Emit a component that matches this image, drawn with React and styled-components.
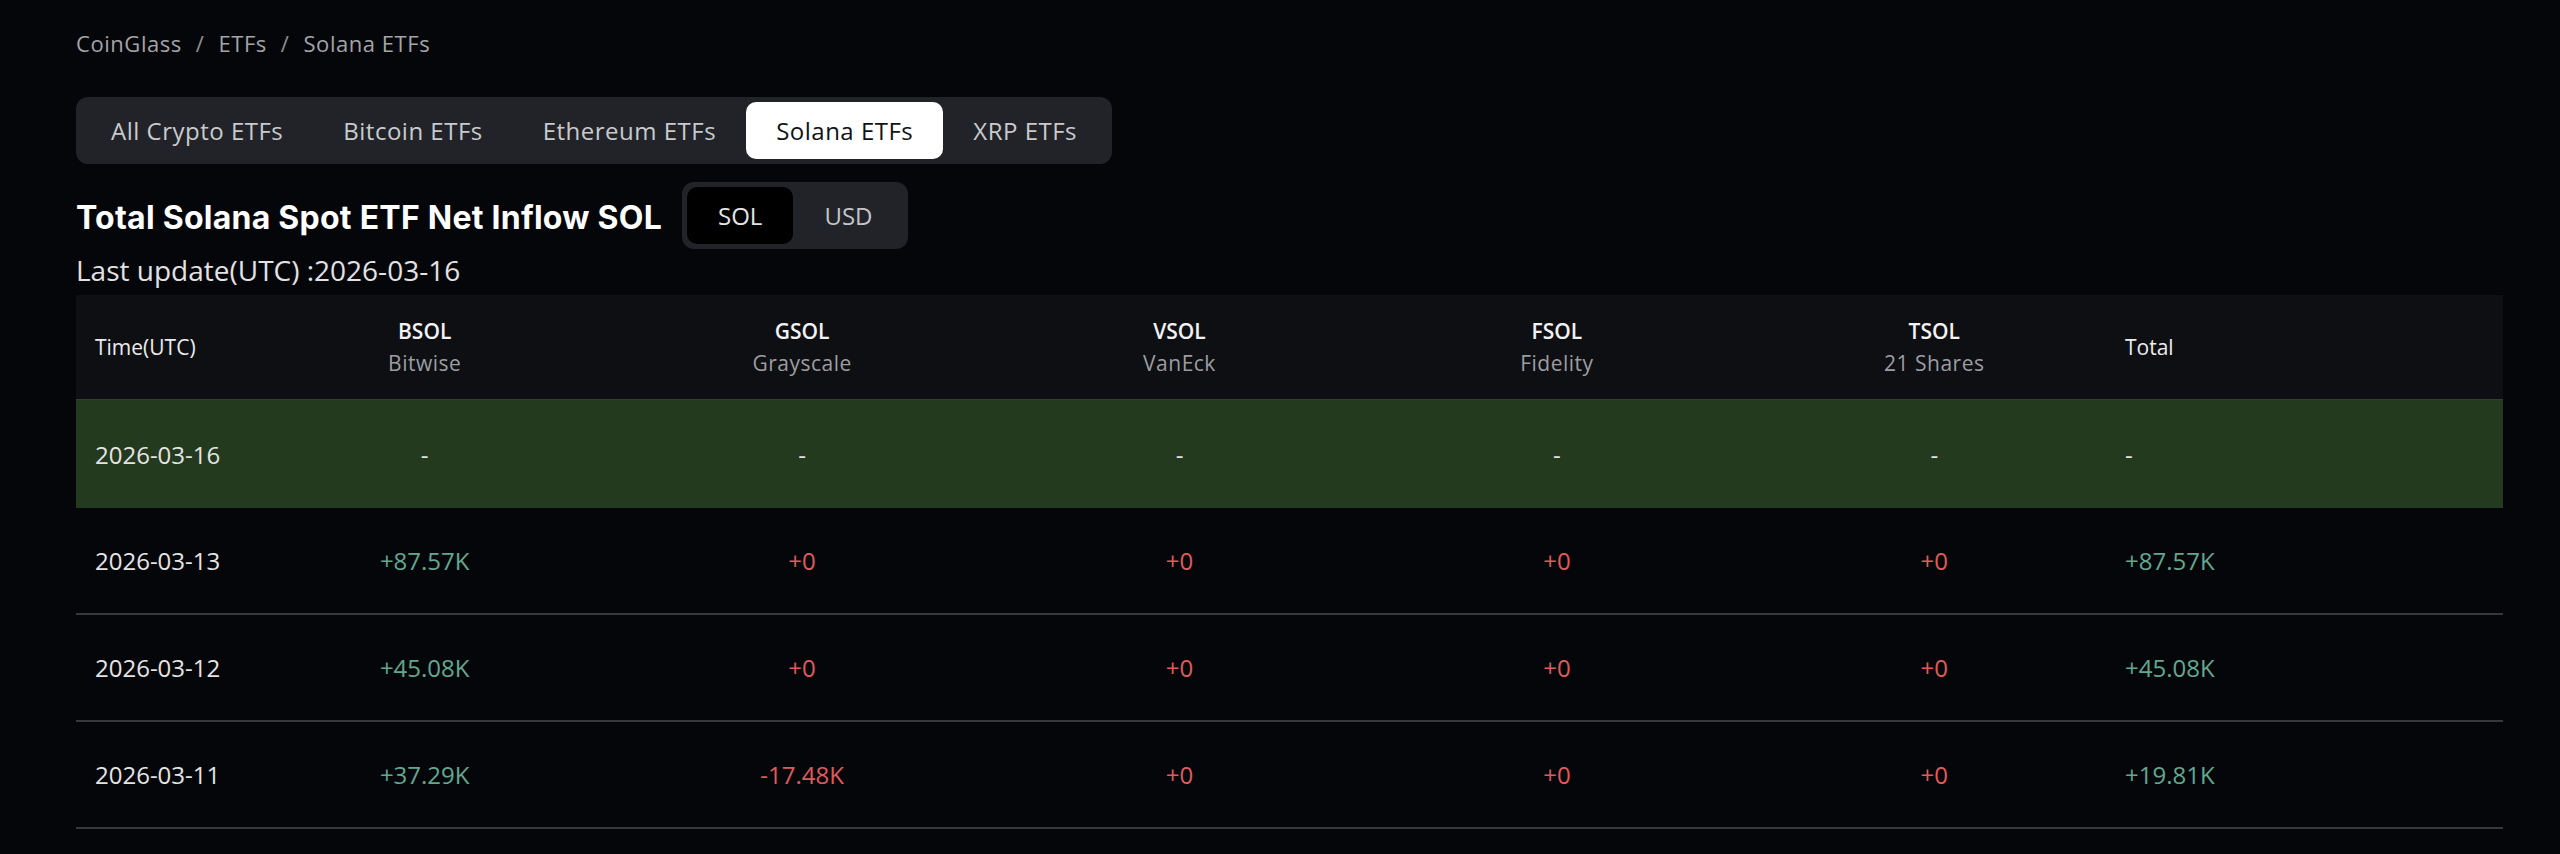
import React from 'react';
import styled, { createGlobalStyle } from 'styled-components';

const GlobalStyle = createGlobalStyle`
  html, body { margin: 0; padding: 0; background: #05060a; }
  body { font-family: "Open Sans", "Noto Sans", sans-serif; color: #e6e6e6; }
  * { box-sizing: border-box; }
`;

const Page = styled.div`
  width: 2503px;
  padding: 28px 0 0 76px;
`;

const Breadcrumb = styled.nav`
  display: flex;
  align-items: center;
  gap: 14px;
  font-size: 22px;
  line-height: 30px;
  letter-spacing: 0.55px;
  color: #a3a4a8;
`;

const Sep = styled.span`
  color: #8e8f93;
`;

const TabBar = styled.div`
  margin-top: 39px;
  display: inline-flex;
  padding: 5px;
  background: #212329;
  border-radius: 12px;
`;

const Tab = styled.div`
  height: 57px;
  padding: 0 30px;
  display: flex;
  align-items: center;
  font-size: 24px;
  letter-spacing: 0.5px;
  border-radius: 10px;
  color: ${p => (p.$active ? '#111214' : '#c9cacd')};
  background: ${p => (p.$active ? '#ffffff' : 'transparent')};
`;

const TitleRow = styled.div`
  margin-top: 18px;
  display: flex;
  align-items: center;
  gap: 20px;
`;

const Title = styled.h1`
  margin: 3px 0 0;
  font-family: Inter, "Open Sans", sans-serif;
  font-weight: 700;
  font-size: 32px;
  letter-spacing: 0.25px;
  color: #ffffff;
`;

const Toggle = styled.div`
  display: flex;
  padding: 5px;
  background: #212329;
  border-radius: 12px;
`;

const ToggleBtn = styled.div`
  height: 57px;
  padding: 0 31px;
  display: flex;
  align-items: center;
  font-size: 24px;
  border-radius: 10px;
  color: ${p => (p.$active ? '#e4e4e6' : '#c4c5c9')};
  background: ${p => (p.$active ? '#000000' : 'transparent')};
`;

const Updated = styled.div`
  margin-top: 5px;
  font-size: 28px;
  line-height: 33px;
  color: #e2e2e4;
`;

const Table = styled.div`
  margin-top: 8px;
  width: 2427px;
`;

const cols = '160px repeat(5, 1fr) 380px';

const HeadRow = styled.div`
  display: grid;
  grid-template-columns: ${cols};
  height: 104px;
  background: #0e0f12;
`;

const HeadCell = styled.div`
  display: flex;
  flex-direction: column;
  justify-content: center;
  align-items: ${p => (p.$align === 'left' ? 'flex-start' : 'center')};
  padding-left: ${p => p.$pad || 0}px;
  font-size: 21px;
  line-height: 32px;
`;

const Sym = styled.span`
  font-weight: 600;
  color: #f2f2f4;
`;

const Issuer = styled.span`
  color: #9c9da1;
  letter-spacing: 0.5px;
`;

const Label = styled.span`
  font-weight: 500;
  color: #ececee;
`;

const Row = styled.div`
  display: grid;
  grid-template-columns: ${cols};
  height: ${p => (p.$today ? 109 : 107)}px;
  background: ${p => (p.$today ? '#243a1e' : 'transparent')};
  border-bottom: ${p => (p.$today ? 'none' : '2px solid #37383c')};
  border-top: ${p => (p.$today ? '1px solid #2f4129' : 'none')};
`;

const Cell = styled.div`
  display: flex;
  align-items: center;
  justify-content: ${p => (p.$align === 'left' ? 'flex-start' : 'center')};
  padding-left: ${p => p.$pad || 0}px;
  font-size: 24px;
  color: ${p =>
    p.$tone === 'up' ? '#62a88f' : p.$tone === 'down' ? '#e05a5c' : '#e4e4e6'};
`;

const tabs = ['All Crypto ETFs', 'Bitcoin ETFs', 'Ethereum ETFs', 'Solana ETFs', 'XRP ETFs'];

const funds = [
  ['BSOL', 'Bitwise'],
  ['GSOL', 'Grayscale'],
  ['VSOL', 'VanEck'],
  ['FSOL', 'Fidelity'],
  ['TSOL', '21 Shares'],
];

const rows = [
  { date: '2026-03-16', today: true, vals: ['-', '-', '-', '-', '-'], total: '-' },
  { date: '2026-03-13', vals: ['+87.57K', '+0', '+0', '+0', '+0'], total: '+87.57K' },
  { date: '2026-03-12', vals: ['+45.08K', '+0', '+0', '+0', '+0'], total: '+45.08K' },
  { date: '2026-03-11', vals: ['+37.29K', '-17.48K', '+0', '+0', '+0'], total: '+19.81K' },
];

const tone = v => {
  if (v === '-') return undefined;
  if (v === '+0' || v.startsWith('-')) return 'down';
  return 'up';
};

export default function App() {
  return (
    <>
      <GlobalStyle />
      <Page>
        <Breadcrumb>
          <span>CoinGlass</span>
          <Sep>/</Sep>
          <span>ETFs</span>
          <Sep>/</Sep>
          <span>Solana ETFs</span>
        </Breadcrumb>
        <TabBar>
          {tabs.map(t => (
            <Tab key={t} $active={t === 'Solana ETFs'}>{t}</Tab>
          ))}
        </TabBar>
        <TitleRow>
          <Title>Total Solana Spot ETF Net Inflow SOL</Title>
          <Toggle>
            <ToggleBtn $active>SOL</ToggleBtn>
            <ToggleBtn>USD</ToggleBtn>
          </Toggle>
        </TitleRow>
        <Updated>Last update(UTC) :2026-03-16</Updated>
        <Table>
          <HeadRow>
            <HeadCell $align="left" $pad={19}><Label>Time(UTC)</Label></HeadCell>
            {funds.map(([s, n]) => (
              <HeadCell key={s}>
                <Sym>{s}</Sym>
                <Issuer>{n}</Issuer>
              </HeadCell>
            ))}
            <HeadCell $align="left" $pad={2}><Label>Total</Label></HeadCell>
          </HeadRow>
          {rows.map(r => (
            <Row key={r.date} $today={r.today}>
              <Cell $align="left" $pad={19}>{r.date}</Cell>
              {r.vals.map((v, i) => (
                <Cell key={i} $tone={tone(v)}>{v}</Cell>
              ))}
              <Cell $align="left" $pad={2} $tone={tone(r.total)}>{r.total}</Cell>
            </Row>
          ))}
        </Table>
      </Page>
    </>
  );
}
